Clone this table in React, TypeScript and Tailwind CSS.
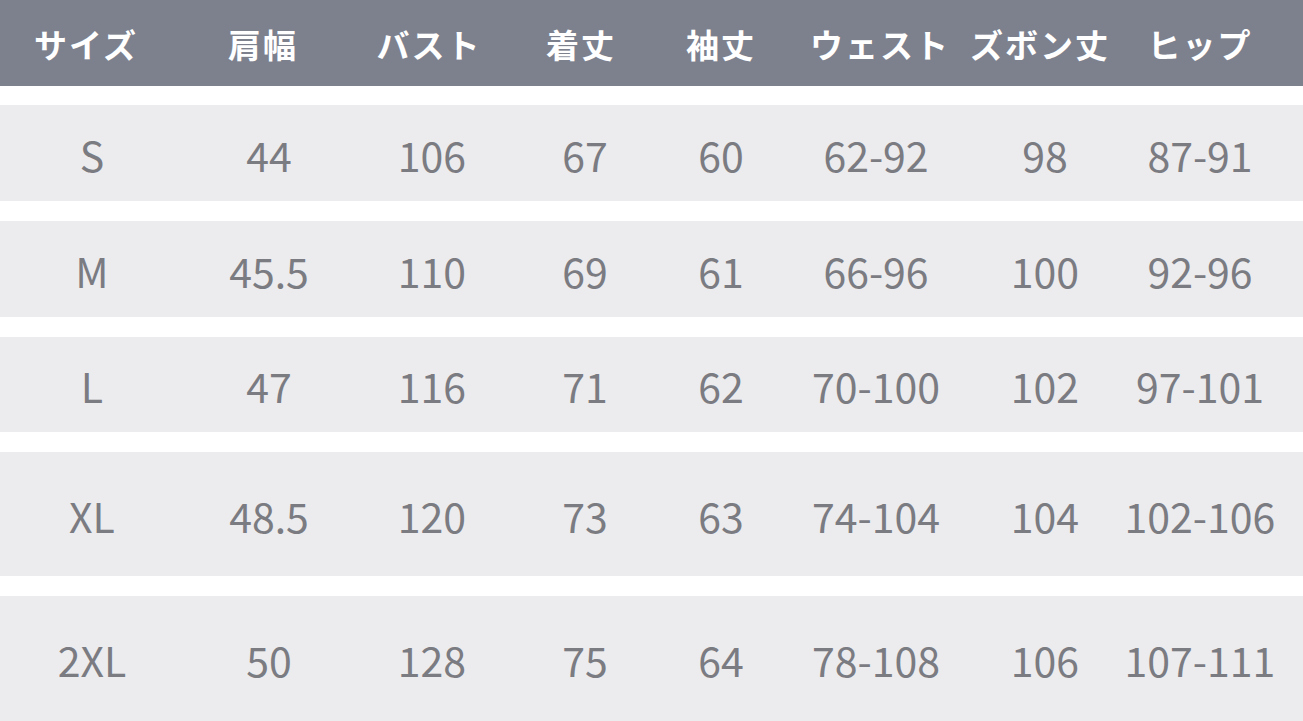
const headers = ["サイズ", "肩幅", "バスト", "着丈", "袖丈", "ウェスト", "ズボン丈", "ヒップ"];

// header labels sit a few px off the column centres in the original
const headerShift = ["pr-[12px]", "pr-[12px]", "pr-[6px]", "pr-[8px]", "", "pl-[8px]", "pr-[10px]", ""];

const rows = [
  { h: "h-[96px]", cells: ["S", "44", "106", "67", "60", "62-92", "98", "87-91"] },
  { h: "h-[96px]", cells: ["M", "45.5", "110", "69", "61", "66-96", "100", "92-96"] },
  { h: "h-[95px]", cells: ["L", "47", "116", "71", "62", "70-100", "102", "97-101"] },
  { h: "h-[124px]", cells: ["XL", "48.5", "120", "73", "63", "74-104", "104", "102-106"] },
  { h: "h-[125px]", cells: ["2XL", "50", "128", "75", "64", "78-108", "106", "107-111"] },
];

const cols = "grid grid-cols-[184px_170px_156px_150px_122px_188px_150px_160px] pr-[23px]";

export default function App() {
  return (
    <div
      className="w-[1303px] h-[721px] overflow-hidden bg-white flex flex-col gap-[20px]"
      style={{ fontFamily: '"Noto Sans CJK JP", "Noto Sans", sans-serif' }}
    >
      <div className={`${cols} h-[86px] bg-[#7d818e] mb-[-1px] shrink-0`}>
        {headers.map((h, i) => (
          <div
            key={h}
            className={`flex items-center justify-center pt-[4px] text-white text-[33px] font-bold tracking-[2px] whitespace-nowrap ${headerShift[i]}`}
          >
            {h}
          </div>
        ))}
      </div>

      {rows.map((r) => (
        <div key={r.cells[0]} className={`${cols} ${r.h} bg-[#ececee] shrink-0`}>
          {r.cells.map((c, i) => (
            <div
              key={i}
              className="flex items-center justify-center pt-[2px] text-[41px] font-normal text-[#7b7b82] leading-none whitespace-nowrap"
            >
              {c}
            </div>
          ))}
        </div>
      ))}
    </div>
  );
}
